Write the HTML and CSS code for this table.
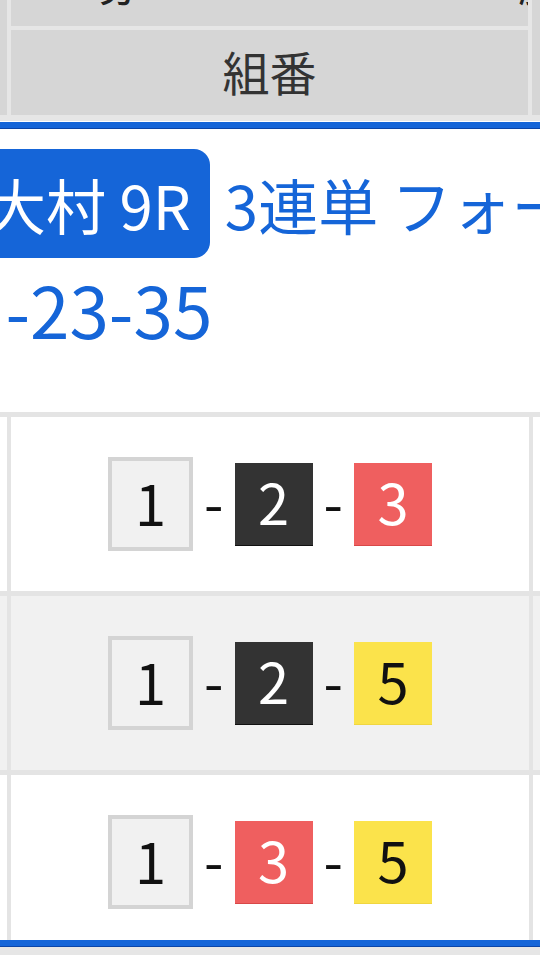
FILE: index.html
```html
<!DOCTYPE html>
<html lang="ja">
<head>
<meta charset="utf-8">
<title>大村 9R 3連単 フォーメーション</title>
<link rel="stylesheet" href="styles.css">
</head>
<body>
<div class="page">
  <div class="hdr-table">
    <div class="stub stub-l"></div>
    <div class="hcell hcell-top"><span class="cut">券　　　　・　　　勝ち方</span></div>
    <div class="stub stub-r"></div>
    <div class="hcell hcell-main">組番</div>
  </div>
  <div class="hdr-bottom"></div>
  <div class="blue-rule"></div>

  <section class="bet">
    <div class="bet-line1">
      <span class="badge">大村 9R</span>
      <span class="bet-type">3連単 フォーメーション</span>
    </div>
    <div class="bet-combo"><span class="lead">1</span>-23-35</div>
  </section>

  <div class="combos">
    <div class="crow">
      <div class="side"></div>
      <div class="ccell">
        <span class="box b1">1</span><span class="dash">-</span><span class="box b-black">2</span><span class="dash">-</span><span class="box b-red">3</span>
      </div>
      <div class="side"></div>
    </div>
    <div class="crow alt">
      <div class="side"></div>
      <div class="ccell">
        <span class="box b1">1</span><span class="dash">-</span><span class="box b-black">2</span><span class="dash">-</span><span class="box b-yellow">5</span>
      </div>
      <div class="side"></div>
    </div>
    <div class="crow last">
      <div class="side"></div>
      <div class="ccell">
        <span class="box b1">1</span><span class="dash">-</span><span class="box b-red">3</span><span class="dash">-</span><span class="box b-yellow">5</span>
      </div>
      <div class="side"></div>
    </div>
  </div>
  <div class="blue-rule"></div>
  <div class="foot"></div>
</div>
</body>
</html>
```
FILE: styles.css
```css
html, body {
  margin: 0;
  padding: 0;
  background: #fff;
}
body {
  font-family: "Noto Sans CJK JP", "Noto Sans", sans-serif;
  width: 540px;
  height: 960px;
  overflow: hidden;
}
.page {
  width: 540px;
  overflow: hidden;
}

/* top header table */
.hdr-table {
  display: grid;
  grid-template-columns: 7px 517px 8px;
  grid-template-rows: 26px 85px;
  column-gap: 4px;
  row-gap: 4px;
  background: #e6e6e6;
}
.stub { background: #d6d6d6; }
.stub-l { grid-column: 1; grid-row: 1 / 3; }
.stub-r { grid-column: 3; grid-row: 1 / 3; }
.hcell {
  background: #d6d6d6;
  color: #333;
  overflow: hidden;
}
.hcell-top { grid-column: 2; grid-row: 1; }
.cut {
  display: block;
  font-size: 47px;
  line-height: 47px;
  margin-top: -43px;
  padding-left: 84px;
  white-space: nowrap;
  color: #222;
}
.hcell-main {
  grid-column: 2;
  grid-row: 2;
  display: flex;
  align-items: center;
  justify-content: center;
  font-size: 47px;
  line-height: 1;
  padding-bottom: 4px;
  box-sizing: border-box;
}
.hdr-bottom {
  height: 6px;
  background: #e6e6e6;
  border-bottom: 1px solid #fff;
}
.blue-rule {
  height: 6px;
  background: #1565d8;
  border-bottom: 1px solid #0b45a8;
}

/* bet summary */
.bet {
  background: #fff;
  padding: 20px 0 68px;
  overflow: hidden;
  color: #1565d8;
}
.bet-line1 {
  display: flex;
  align-items: center;
  white-space: nowrap;
  margin-left: -34px;
}
.badge {
  display: flex;
  align-items: center;
  height: 109px;
  padding: 0 19px 0 20px;
  background: #1565d8;
  color: #fff;
  border-radius: 16px;
  font-size: 60px;
  line-height: 1;
  flex: none;
}
.bet-type {
  margin-left: 15px;
  font-size: 60px;
  line-height: 1;
  flex: none;
}
.bet-combo {
  font-size: 71px;
  line-height: 71px;
  height: 71px;
  margin-top: 15px;
  margin-left: -38px;
  white-space: nowrap;
}
.lead { margin-right: 4px; }

/* combination rows */
.combos {
  border-top: 5px solid #e4e4e4;
  background: #e4e4e4;
  display: flex;
  flex-direction: column;
  gap: 5px;
}
.crow {
  display: flex;
  gap: 4px;
}
.side {
  width: 7px;
  flex: none;
  background: #fff;
}
.ccell {
  flex: 1;
  background: #fff;
  padding: 40px 0;
  display: flex;
  justify-content: center;
  align-items: center;
}
.crow.alt .side,
.crow.alt .ccell { background: #f1f1f1; }
.crow.last {
  height: 165px;
  overflow: hidden;
  align-items: flex-start;
}
.crow.last .side { align-self: stretch; }

.box {
  display: flex;
  align-items: center;
  justify-content: center;
  box-sizing: border-box;
  width: 78px;
  height: 83px;
  font-size: 56px;
  line-height: 1;
  padding-bottom: 5px;
}
.b1 {
  width: 85px;
  height: 94px;
  border: 4px solid #d4d4d4;
  background: #f1f1f1;
  color: #111;
}
.b-black {
  background: #333;
  color: #fff;
  border-bottom: 1px solid #111;
}
.b-red {
  background: #ef5f5f;
  color: #fff;
  border-bottom: 1px solid #d84848;
}
.b-yellow {
  background: #fbe34b;
  color: #111;
  border-bottom: 1px solid #f0d640;
}
.dash {
  font-size: 56px;
  line-height: 1;
  color: #111;
  margin: 0 11px;
  padding-bottom: 6px;
}

.foot {
  height: 8px;
  background: #e6e6e6;
  border-bottom: 2px solid #fff;
}
```
